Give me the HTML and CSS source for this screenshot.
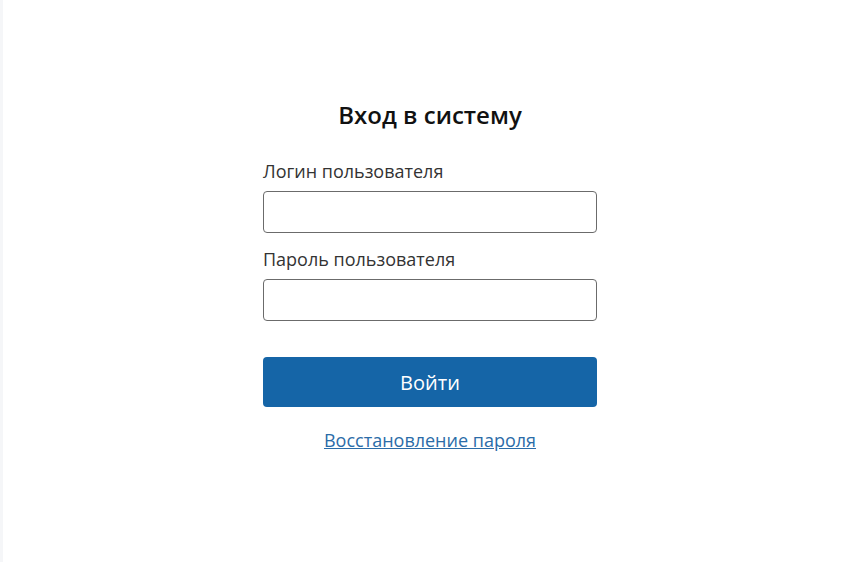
FILE: index.html
```html
<!DOCTYPE html>
<html lang="ru">
<head>
<meta charset="utf-8">
<title>Вход в систему</title>
<link rel="stylesheet" href="styles.css">
</head>
<body>
<div class="page">
  <div class="strip"></div>
  <main class="main">
    <form class="login">
      <h1 class="title">Вход в систему</h1>
      <label class="label" for="login">Логин пользователя</label>
      <input class="input" id="login" type="text">
      <label class="label label-second" for="pass">Пароль пользователя</label>
      <input class="input" id="pass" type="password">
      <button class="btn" type="button">Войти</button>
      <a class="link" href="#">Восстановление пароля</a>
    </form>
  </main>
</div>
</body>
</html>
```
FILE: styles.css
```css
html, body {
  margin: 0;
  padding: 0;
  background: #ffffff;
  font-family: "Open Sans", "Liberation Sans", sans-serif;
}
.page {
  display: flex;
  min-height: 562px;
}
.strip {
  width: 3px;
  background: #f5f6f8;
  flex: none;
}
.main {
  flex: 1;
  display: flex;
  justify-content: center;
  padding-right: 3px;
}
.login {
  width: 334px;
  display: flex;
  flex-direction: column;
  padding-top: 100px;
}
.title {
  margin: 0 0 29px;
  font-size: 24px;
  line-height: 30px;
  font-weight: 600;
  color: #111111;
  text-align: center;
}
.label {
  font-size: 18px;
  line-height: 24px;
  color: #333333;
  margin-bottom: 8px;
}
.label-second {
  margin-top: 14px;
}
.input {
  box-sizing: border-box;
  height: 42px;
  width: 100%;
  border: 1px solid #6b6b6b;
  border-radius: 4px;
  margin: 0;
  padding: 0 10px;
  font: inherit;
  background: #fff;
}
.btn {
  margin-top: 36px;
  height: 50px;
  width: 100%;
  border: none;
  border-radius: 4px;
  background: #1565a7;
  color: #ffffff;
  font-family: inherit;
  font-size: 20px;
  cursor: pointer;
}
.link {
  margin-top: 21px;
  align-self: center;
  font-size: 18px;
  line-height: 24px;
  color: #2b6ca8;
  text-decoration: underline;
}
```
